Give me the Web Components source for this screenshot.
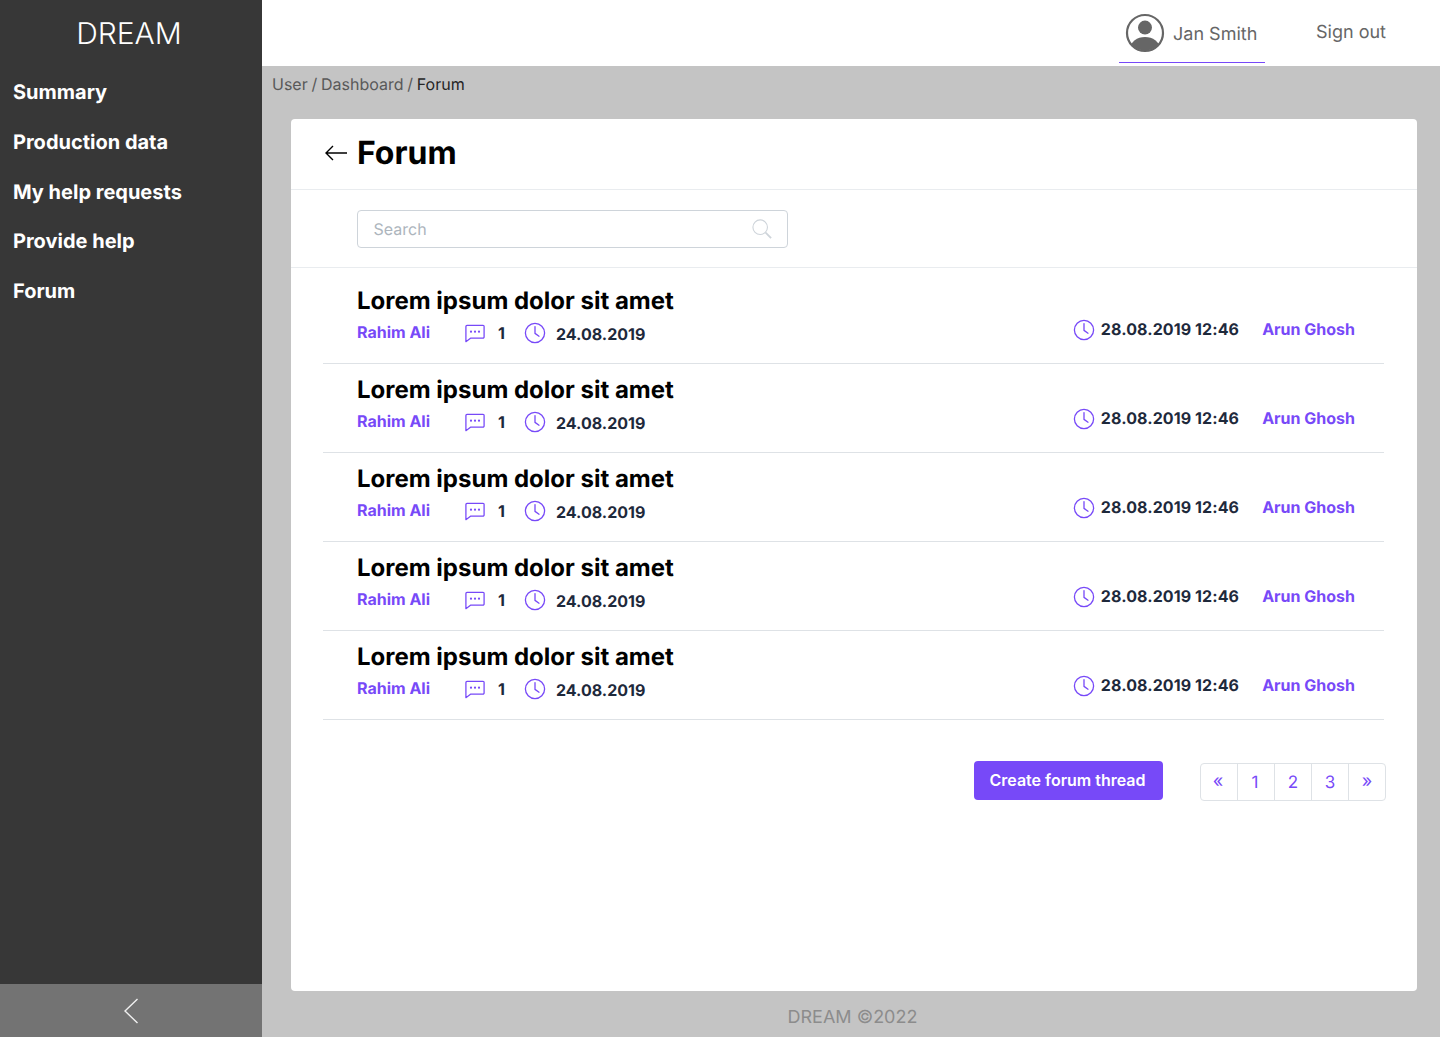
<!DOCTYPE html>
<html lang="en">
<head>
<meta charset="utf-8">
<title>Forum</title>
<style>
  html, body { margin: 0; height: 100%; }
  body { font-family: Inter, "Liberation Sans", sans-serif; text-rendering: geometricPrecision; }
</style>
</head>
<body>
<app-shell>
  <side-nav slot="nav"></side-nav>
  <top-bar slot="top"></top-bar>
  <forum-card>
    <forum-row></forum-row>
    <forum-row></forum-row>
    <forum-row></forum-row>
    <forum-row></forum-row>
    <forum-row></forum-row>
  </forum-card>
</app-shell>

<script>
  const clockIcon = `<svg width="22" height="22" viewBox="0 0 22 22" fill="none" stroke="#7749f8" stroke-width="1.3" stroke-linecap="round" stroke-linejoin="round"><circle cx="11" cy="11" r="9.6"/><path d="M11 4.6V11.4L15 14.2"/></svg>`;
  const chatIcon = `<svg class="chat" width="20" height="19" viewBox="0 0 22 20" fill="none"><path d="M2.2 1H19.8A1.2 1.2 0 0 1 21 2.2V13.8A1.2 1.2 0 0 1 19.8 15H6.4L1 19V2.2A1.2 1.2 0 0 1 2.2 1Z" stroke="#7749f8" stroke-width="1.4" stroke-linejoin="round"/><circle cx="6.6" cy="8" r="1.2" fill="#7749f8"/><circle cx="11" cy="8" r="1.2" fill="#7749f8"/><circle cx="15.4" cy="8" r="1.2" fill="#7749f8"/></svg>`;

  // page frame: sidebar on the left, top bar + content on the right
  class AppShell extends HTMLElement {
    constructor() {
      super();
      this.attachShadow({ mode: 'open' });
      this.shadowRoot.innerHTML = `
        <style>
          :host { display: grid; grid-template-columns: 262px 1fr; height: 1037px; overflow: hidden; background: #c4c4c4; }
          .main { display: flex; flex-direction: column; min-width: 0; }
          .crumbs { height: 53px; box-sizing: border-box; padding: 9px 0 0 10px; font-size: 16px; line-height: 19px; color: #595959; word-spacing: -0.75px; }
          .crumbs b { font-weight: 400; color: #262626; }
          .content { padding: 0 23px 0 29px; flex: 1; display: flex; }
          .foot { height: 46px; box-sizing: border-box; padding-top: 16px; padding-left: 3px; text-align: center; font-size: 18px; line-height: 22px; color: #8c8c8c; }
        </style>
        <slot name="nav"></slot>
        <div class="main">
          <slot name="top"></slot>
          <div class="crumbs">User / Dashboard / <b>Forum</b></div>
          <div class="content"><slot></slot></div>
          <div class="foot">DREAM ©2022</div>
        </div>`;
    }
  }

  class SideNav extends HTMLElement {
    constructor() {
      super();
      this.attachShadow({ mode: 'open' });
      const items = ['Summary', 'Production data', 'My help requests', 'Provide help', 'Forum'];
      this.shadowRoot.innerHTML = `
        <style>
          :host { display: flex; flex-direction: column; background: #373737; color: #fff; height: 1037px; }
          .logo { height: 67px; box-sizing: border-box; padding: 16px 4px 0 0; text-align: center; font-size: 30px; line-height: 36px; font-weight: 300; }
          nav { flex: 1; display: flex; flex-direction: column; }
          a { height: 49.8px; padding-left: 13px; font-size: 20px; line-height: 50px; font-weight: 700; }
          .collapse { height: 53px; background: #737373; display: flex; align-items: center; justify-content: center; }
        </style>
        <div class="logo">DREAM</div>
        <nav>${items.map(i => `<a>${i}</a>`).join('')}</nav>
        <div class="collapse">
          <svg width="14" height="26" viewBox="0 0 14 26" fill="none" stroke="#f0f0f0" stroke-width="1.4"><path d="M13.5 1 1 13 13.5 25"/></svg>
        </div>`;
    }
  }

  class TopBar extends HTMLElement {
    constructor() {
      super();
      this.attachShadow({ mode: 'open' });
      this.shadowRoot.innerHTML = `
        <style>
          :host { display: flex; justify-content: flex-end; height: 66px; background: #fff; color: #666; font-size: 18px; }
          .user { display: flex; align-items: center; gap: 8px; width: 146px; height: 63px; box-sizing: border-box; padding: 3px 0 0 6px; border-bottom: 1px solid #7749f8; }
          .user span { margin-top: 4px; }
          .out { width: 175px; box-sizing: border-box; padding: 22px 0 0 51px; line-height: 22px; }
          svg { display: block; }
        </style>
        <div class="user">
          <svg width="40" height="40" viewBox="0 0 40 40"><defs><clipPath id="c"><circle cx="20" cy="20" r="17.6"/></clipPath></defs><circle cx="20" cy="20" r="18" fill="none" stroke="#666" stroke-width="2.2"/><circle cx="20" cy="14.6" r="7" fill="#666"/><ellipse cx="20" cy="35" rx="14.5" ry="11" fill="#666" clip-path="url(#c)"/></svg>
          <span>Jan Smith</span>
        </div>
        <div class="out">Sign out</div>`;
    }
  }

  class ForumCard extends HTMLElement {
    constructor() {
      super();
      this.attachShadow({ mode: 'open' });
      this.shadowRoot.innerHTML = `
        <style>
          :host { display: block; flex: 1; width: 1126px; height: 872px; background: #fff; border-radius: 4px; color: #000; }
          .head { height: 71px; box-sizing: border-box; display: flex; align-items: center; gap: 10px; padding: 0 0 2px 34px; border-bottom: 1px solid #e9ecef; }
          h1 { margin: 0; font-size: 32px; line-height: 40px; font-weight: 700; }
          .search-row { height: 78px; box-sizing: border-box; padding: 20px 0 0 66px; border-bottom: 1px solid #e9ecef; }
          .search { width: 431px; height: 38px; box-sizing: border-box; border: 1px solid #ced4da; border-radius: 4px; display: flex; align-items: center; justify-content: space-between; padding: 0 15px 0 15.5px; font-size: 16px; color: #adb5bd; }
          .rows { padding: 0 33px 0 32px; }
          .foot { display: flex; justify-content: flex-end; align-items: flex-start; padding: 41px 31px 0 0; gap: 37px; }
          button { font: inherit; font-size: 16px; font-weight: 600; height: 39px; width: 189px; padding: 0 2px 2px 0; color: #fff; background: #7749f8; border: 0; border-radius: 4px; }
          .pager { display: flex; margin-top: 2px; height: 38px; box-sizing: border-box; border: 1px solid #dee2e6; border-radius: 4px; color: #7749f8; font-size: 17px; }
          .pager span { width: 37px; box-sizing: border-box; padding-top: 2px; display: flex; align-items: center; justify-content: center; border-left: 1px solid #dee2e6; }
          .pager span:first-child { border-left: 0; width: 36px; padding-right: 2px; }
          .pager span:nth-child(2) { padding-right: 2px; }
          .pager .arrow { font-size: 18px; padding-top: 0; padding-bottom: 1px; }
        </style>
        <div class="head">
          <svg width="22" height="16" viewBox="0 0 22 16" fill="none" stroke="#000" stroke-width="1.4"><path d="M22 8H1M8 1 1 8l7 7"/></svg>
          <h1>Forum</h1>
        </div>
        <div class="search-row">
          <div class="search">
            <span>Search</span>
            <svg width="20" height="20" viewBox="0 0 22 22" fill="none" stroke="#ced4da" stroke-width="1.2"><circle cx="9" cy="9" r="8"/><path d="M15 15 21 21" stroke-width="2"/></svg>
          </div>
        </div>
        <div class="rows"><slot></slot></div>
        <div class="foot">
          <button>Create forum thread</button>
          <div class="pager"><span class="arrow">«</span><span>1</span><span>2</span><span>3</span><span class="arrow">»</span></div>
        </div>`;
    }
  }

  class ForumRow extends HTMLElement {
    constructor() {
      super();
      this.attachShadow({ mode: 'open' });
      this.shadowRoot.innerHTML = `
        <style>
          :host { display: flex; justify-content: space-between; height: 89px; box-sizing: border-box; padding: 11px 29px 0 34px; border-bottom: 1px solid #dee2e6; }
          :host(:first-child) { height: 96px; padding-top: 18px; }
          h2 { margin: 0 0 6px; font-size: 24px; line-height: 30px; font-weight: 700; color: #000; }
          .meta, .last { display: flex; align-items: center; font-size: 16px; font-weight: 700; color: #1e293b; }
          .name { color: #7749f8; font-size: 16px; font-weight: 700; }
          .meta .name { width: 108px; margin-top: -3px; }
          .meta .chat { margin-right: 13px; }
          .count { width: 26px; }
          .meta .date { margin-left: 10px; margin-top: 1px; }
          .last { margin-top: 28px; height: 30px; }
          .last .when { margin: 0 23px 0 6px; letter-spacing: 0.1px; }
          .last svg { margin-top: 2px; }
        </style>
        <div>
          <h2>Lorem ipsum dolor sit amet</h2>
          <div class="meta">
            <span class="name">Rahim Ali</span>
            ${chatIcon}
            <span class="count">1</span>
            ${clockIcon}
            <span class="date">24.08.2019</span>
          </div>
        </div>
        <div class="last">
          ${clockIcon}
          <span class="when">28.08.2019 12:46</span>
          <span class="name">Arun Ghosh</span>
        </div>`;
    }
  }

  customElements.define('app-shell', AppShell);
  customElements.define('side-nav', SideNav);
  customElements.define('top-bar', TopBar);
  customElements.define('forum-card', ForumCard);
  customElements.define('forum-row', ForumRow);
</script>
</body>
</html>
